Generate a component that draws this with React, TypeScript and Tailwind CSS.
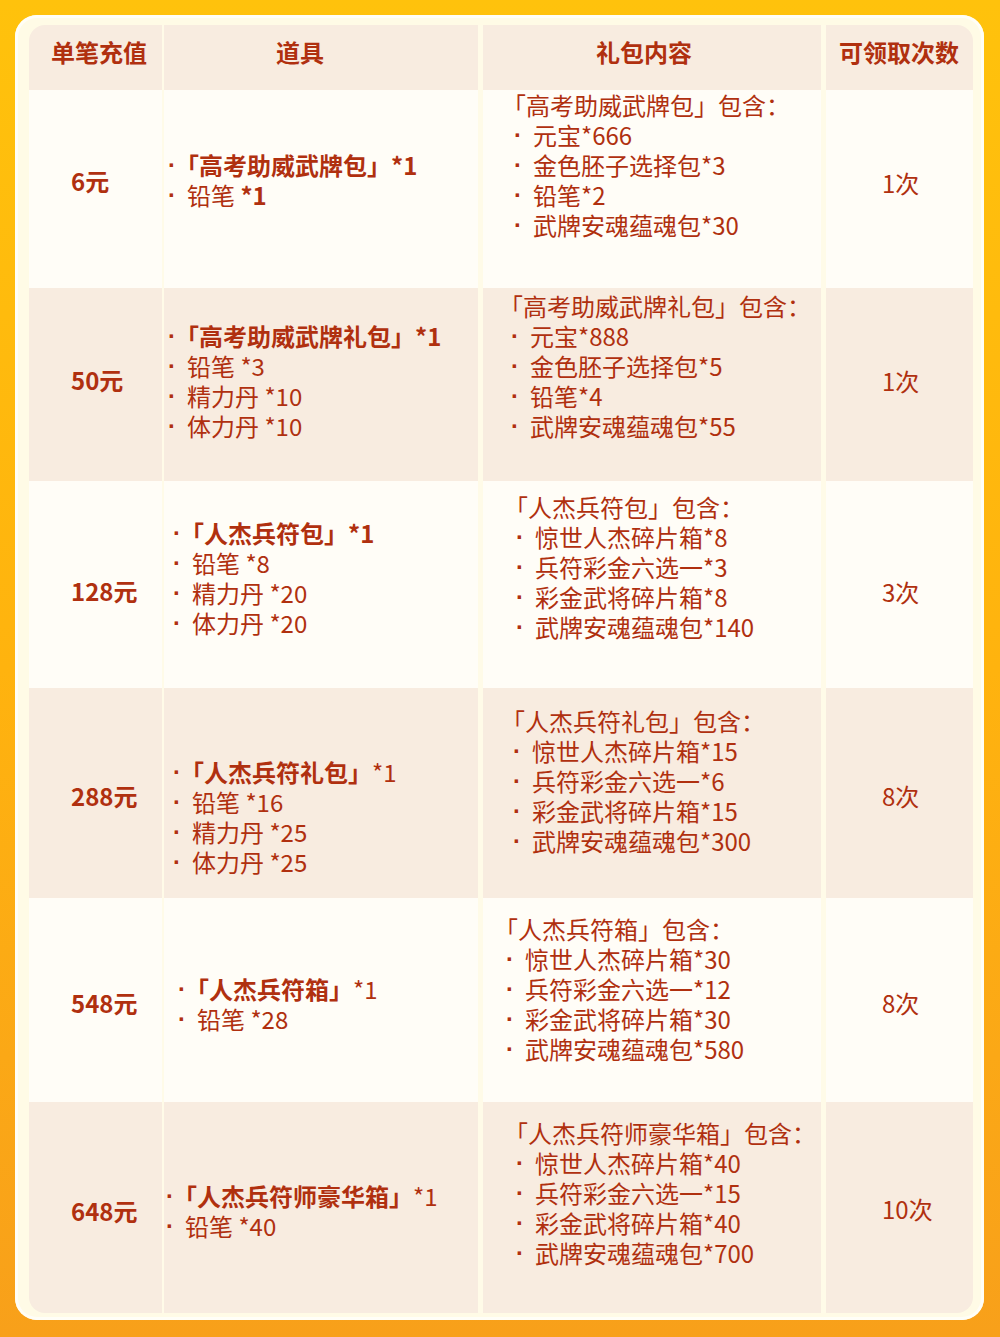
import React from "react";

type Item = { text: string; count: string; title?: boolean; bold?: boolean };

type Row = {
  amount: string;
  times: string;
  height: string;
  bg: string;
  amountTop: string;
  timesTop: string;
  itemsTop: string;
  itemsLeft: string;
  items: Item[];
  packTop: string;
  packLeft: string;
  packTitle: string;
  pack: string[];
};

const rows: Row[] = [
  {
    amount: "6元",
    times: "1次",
    height: "h-[198px]",
    bg: "bg-[#fffdf7]",
    amountTop: "pt-[76px]",
    timesTop: "pt-[78px]",
    itemsTop: "pt-[60px]",
    itemsLeft: "pl-[4px]",
    items: [
      { text: "「高考助威武牌包」", count: "*1", title: true, bold: true },
      { text: "铅笔 ", count: "*1", bold: true },
    ],
    packTop: "pt-0",
    packLeft: "pl-[31px]",
    packTitle: "「高考助威武牌包」包含：",
    pack: ["元宝*666", "金色胚子选择包*3", "铅笔*2", "武牌安魂蕴魂包*30"],
  },
  {
    amount: "50元",
    times: "1次",
    height: "h-[193px]",
    bg: "bg-[#f8ece0]",
    amountTop: "pt-[77px]",
    timesTop: "pt-[78px]",
    itemsTop: "pt-[33px]",
    itemsLeft: "pl-[4px]",
    items: [
      { text: "「高考助威武牌礼包」", count: "*1", title: true, bold: true },
      { text: "铅笔 ", count: "*3" },
      { text: "精力丹 ", count: "*10" },
      { text: "体力丹 ", count: "*10" },
    ],
    packTop: "pt-[3px]",
    packLeft: "pl-[28px]",
    packTitle: "「高考助威武牌礼包」包含：",
    pack: ["元宝*888", "金色胚子选择包*5", "铅笔*4", "武牌安魂蕴魂包*55"],
  },
  {
    amount: "128元",
    times: "3次",
    height: "h-[207px]",
    bg: "bg-[#fffdf7]",
    amountTop: "pt-[95px]",
    timesTop: "pt-[96px]",
    itemsTop: "pt-[37px]",
    itemsLeft: "pl-[9px]",
    items: [
      { text: "「人杰兵符包」", count: "*1", title: true, bold: true },
      { text: "铅笔 ", count: "*8" },
      { text: "精力丹 ", count: "*20" },
      { text: "体力丹 ", count: "*20" },
    ],
    packTop: "pt-[11px]",
    packLeft: "pl-[33px]",
    packTitle: "「人杰兵符包」包含：",
    pack: ["惊世人杰碎片箱*8", "兵符彩金六选一*3", "彩金武将碎片箱*8", "武牌安魂蕴魂包*140"],
  },
  {
    amount: "288元",
    times: "8次",
    height: "h-[210px]",
    bg: "bg-[#f8ece0]",
    amountTop: "pt-[93px]",
    timesTop: "pt-[93px]",
    itemsTop: "pt-[69px]",
    itemsLeft: "pl-[9px]",
    items: [
      { text: "「人杰兵符礼包」", count: "*1", title: true },
      { text: "铅笔 ", count: "*16" },
      { text: "精力丹 ", count: "*25" },
      { text: "体力丹 ", count: "*25" },
    ],
    packTop: "pt-[18px]",
    packLeft: "pl-[30px]",
    packTitle: "「人杰兵符礼包」包含：",
    pack: ["惊世人杰碎片箱*15", "兵符彩金六选一*6", "彩金武将碎片箱*15", "武牌安魂蕴魂包*300"],
  },
  {
    amount: "548元",
    times: "8次",
    height: "h-[204px]",
    bg: "bg-[#fffdf7]",
    amountTop: "pt-[90px]",
    timesTop: "pt-[90px]",
    itemsTop: "pt-[76px]",
    itemsLeft: "pl-[14px]",
    items: [
      { text: "「人杰兵符箱」", count: "*1", title: true },
      { text: "铅笔 ", count: "*28" },
    ],
    packTop: "pt-[16px]",
    packLeft: "pl-[23px]",
    packTitle: "「人杰兵符箱」包含：",
    pack: ["惊世人杰碎片箱*30", "兵符彩金六选一*12", "彩金武将碎片箱*30", "武牌安魂蕴魂包*580"],
  },
  {
    amount: "648元",
    times: "10次",
    height: "h-[211px]",
    bg: "bg-[#f8ece0]",
    amountTop: "pt-[94px]",
    timesTop: "pt-[92px]",
    itemsTop: "pt-[79px]",
    itemsLeft: "pl-[2px]",
    items: [
      { text: "「人杰兵符师豪华箱」", count: "*1", title: true },
      { text: "铅笔 ", count: "*40" },
    ],
    packTop: "pt-[16px]",
    packLeft: "pl-[33px]",
    packTitle: "「人杰兵符师豪华箱」包含：",
    pack: ["惊世人杰碎片箱*40", "兵符彩金六选一*15", "彩金武将碎片箱*40", "武牌安魂蕴魂包*700"],
  },
];

const Dot: React.FC<{ wide?: boolean }> = ({ wide }) => (
  <span
    className={`inline-block shrink-0 font-['Liberation_Sans',sans-serif] font-bold ${
      wide ? "w-[19px]" : "w-[7px]"
    }`}
  >
    ·
  </span>
);

const App: React.FC = () => {
  return (
    <div className="w-full min-h-[1337px] bg-linear-to-b from-[#ffc20c] via-[#ffb30e] to-[#f8a01a] pt-[15px] pl-[15px] pr-[16px] pb-[17px] font-['Noto_Sans_CJK_SC',sans-serif] text-[#b0300f]">
      <div className="h-[1305px] rounded-[22px] bg-[#fffbe6] shadow-[inset_0_0_0_3px_#fffef7] pt-[10px] pl-[14px] pr-[11px] pb-[7px]">
        <div className="rounded-[16px] overflow-hidden text-[24px] leading-[30px]">
          {/* header */}
          <div className="grid grid-cols-[135px_319px_343px_147px] h-[65px] bg-[#f8ece0] font-bold">
            <div className="border-r-[2px] border-[#fffbe8] pl-[22px] pt-[12px]">单笔充值</div>
            <div className="border-r-[5px] border-[#fffbe8] pl-[112px] pt-[12px]">道具</div>
            <div className="border-r-[5px] border-[#fffbe8] pl-[113px] pt-[12px]">礼包内容</div>
            <div className="pl-[13px] pt-[12px]">可领取次数</div>
          </div>

          {rows.map((row) => (
            <div
              key={row.amount}
              className={`grid grid-cols-[135px_319px_343px_147px] ${row.height} ${row.bg}`}
            >
              <div className={`border-r-[2px] border-[#fffbe8] pl-[42px] font-bold ${row.amountTop}`}>
                {row.amount}
              </div>

              <div className={`border-r-[5px] border-[#fffbe8] ${row.itemsTop} ${row.itemsLeft}`}>
                {row.items.map((item) => (
                  <div key={item.text} className="flex whitespace-pre">
                    <Dot wide={!item.title} />
                    <span className={item.title ? "font-bold" : ""}>{item.text}</span>
                    <span className={item.bold ? "font-bold" : ""}>{item.count}</span>
                  </div>
                ))}
              </div>

              <div className={`border-r-[5px] border-[#fffbe8] whitespace-nowrap ${row.packTop} ${row.packLeft}`}>
                <div className="-ml-[12px]">{row.packTitle}</div>
                {row.pack.map((line) => (
                  <div key={line} className="flex">
                    <Dot wide />
                    <span>{line}</span>
                  </div>
                ))}
              </div>

              <div className={`pl-[56px] ${row.timesTop}`}>{row.times}</div>
            </div>
          ))}
        </div>
      </div>
    </div>
  );
};

export default App;
